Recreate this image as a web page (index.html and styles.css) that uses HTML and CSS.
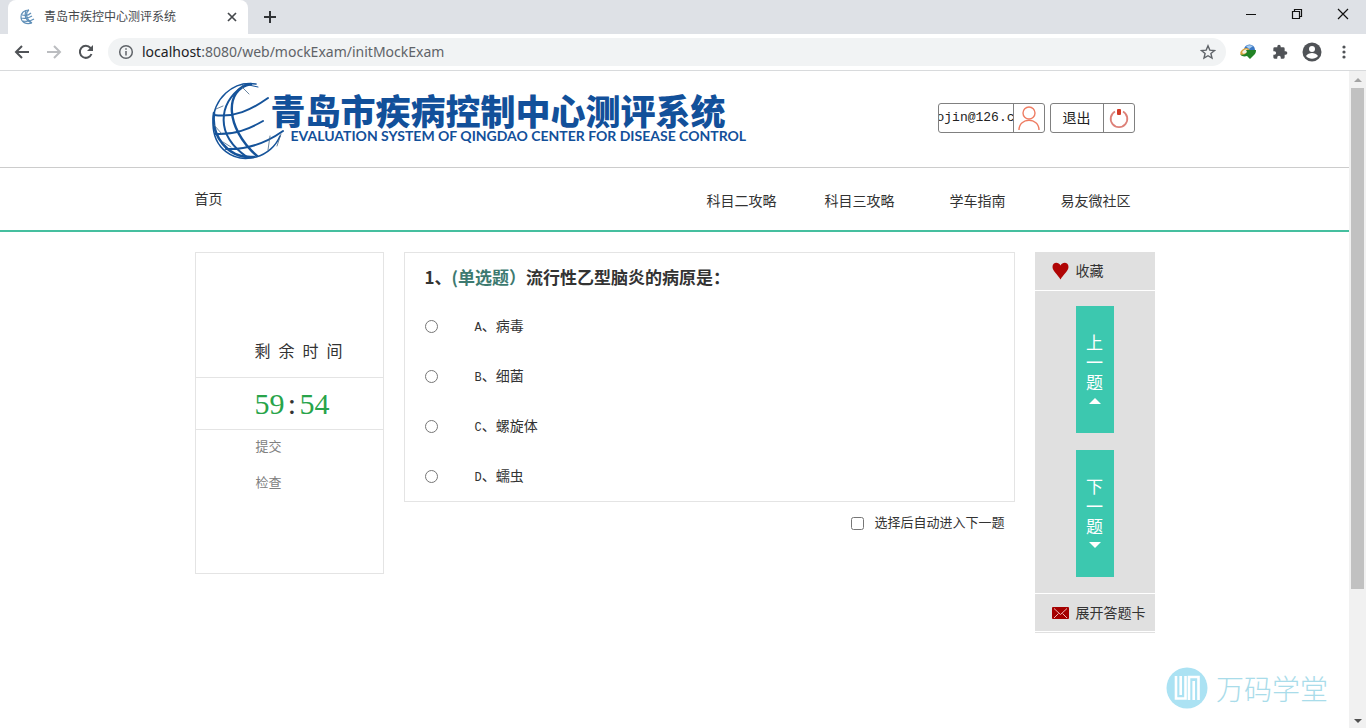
FILE: index.html
```html
<!DOCTYPE html>
<html lang="zh-CN">
<head>
<meta charset="utf-8">
<title>青岛市疾控中心测评系统</title>
<link rel="stylesheet" href="styles.css">
</head>
<body>
<div class="tabstrip">
  <div class="tab">
    <svg class="favicon" width="16" height="16" viewBox="0 0 16 16" fill="none" stroke="#5f8fb8" stroke-width="1.2"><path d="M9 1C4 1 1 4 1 8c0 5 5 8 11 6M6 2c-2 5 0 10 5 12M9 1c-4 3-3 9 3 13M2 6c4 1 7 0 9-2M1 9c5 1 8 0 11-2M3 12c5 1 8 0 11-2"/></svg>
    <span class="tab-title">青岛市疾控中心测评系统</span>
    <button class="icon-btn" aria-label="关闭标签页"><svg width="16" height="16" viewBox="0 0 16 16" fill="none" stroke="#45484c" stroke-width="1.7"><path d="M4 4l8 8M12 4l-8 8"/></svg></button>
  </div>
  <button class="icon-btn new-tab" aria-label="新标签页"><svg width="16" height="16" viewBox="0 0 16 16" fill="none" stroke="#303336" stroke-width="2"><path d="M8 2v12M2 8h12"/></svg></button>
  <div class="win-controls">
    <button class="icon-btn" aria-label="最小化"><svg width="16" height="16" viewBox="0 0 16 16" stroke="#111"><path d="M3 8.500h10"/></svg></button>
    <button class="icon-btn" aria-label="还原"><svg width="16" height="16" viewBox="0 0 16 16" fill="none" stroke="#111" stroke-width="1.2"><path d="M3.500 5.500h7v7h-7zM5.500 5.500v-2h7v7h-2"/></svg></button>
    <button class="icon-btn" aria-label="关闭"><svg width="16" height="16" viewBox="0 0 16 16" stroke="#111" stroke-width="1.2"><path d="M3 3l10 10M13 3L3 13"/></svg></button>
  </div>
</div>
<div class="toolbar">
  <button class="icon-btn" aria-label="后退"><svg width="20" height="20" viewBox="0 0 20 20" fill="none" stroke="#505357" stroke-width="2"><path d="M17 10H4M10 4l-6 6 6 6"/></svg></button>
  <button class="icon-btn" aria-label="前进"><svg width="20" height="20" viewBox="0 0 20 20" fill="none" stroke="#bbbdc0" stroke-width="2"><path d="M3 10h13M10 4l6 6-6 6"/></svg></button>
  <button class="icon-btn" aria-label="刷新"><svg width="20" height="20" viewBox="0 0 20 20" fill="none" stroke="#505357" stroke-width="2"><path d="M15.500 12A6 6 0 1 1 14.500 6L16 7.500"/><path d="M17 3v6h-6z" fill="#505357" stroke="none"/></svg></button>
  <div class="address">
    <svg width="16" height="16" viewBox="0 0 16 16" fill="none" stroke="#5f6368" stroke-width="1.500"><circle cx="8" cy="8" r="6.300"/><path d="M8 7v4.500M8 4.300v1.500"/></svg>
    <span class="url"><span class="host">localhost</span>:8080/web/mockExam/initMockExam</span>
    <button class="icon-btn" aria-label="收藏此页"><svg width="16" height="16" viewBox="0 0 16 16" fill="none" stroke="#5f6368" stroke-width="1.400"><path d="M8 1.800l1.800 4.300 4.700.4-3.600 3 1.100 4.600L8 11.700l-4 2.400 1.100-4.600-3.600-3 4.700-.4z"/></svg></button>
  </div>
  <div class="extensions">
    <button class="icon-btn" aria-label="下载扩展"><svg width="18" height="18" viewBox="0 0 18 18"><circle cx="10.500" cy="7" r="5.500" fill="#3b78c4"/><path d="M7 3c2-1 5-1 7 0l-4 3z" fill="#a9cdef"/><ellipse cx="6" cy="9" rx="5" ry="3.500" fill="#d9a23c" transform="rotate(-30 6 9)"/><ellipse cx="6" cy="8.500" rx="3" ry="1.800" fill="#f4efe0" transform="rotate(-30 6 8.500)"/><path d="M1 11c3 2 6 0 7-2l-1-2 10 0c0 3-1 4-2 5l-4 4-3-3c-3 1-6 0-7-2z" fill="#228326"/></svg></button>
    <button class="icon-btn" aria-label="扩展程序"><svg width="16" height="16" viewBox="0 0 24 24" fill="#505357"><path d="M20.500 11H19V7a2 2 0 0 0-2-2h-4V3.500a2.500 2.500 0 0 0-5 0V5H4a2 2 0 0 0-2 2v3.800h1.500a2.700 2.700 0 0 1 0 5.400H2V20a2 2 0 0 0 2 2h3.800v-1.500a2.700 2.700 0 0 1 5.400 0V22H17a2 2 0 0 0 2-2v-4h1.500a2.500 2.500 0 0 0 0-5z"/></svg></button>
    <button class="icon-btn" aria-label="用户"><svg width="20" height="20" viewBox="0 0 20 20"><circle cx="10" cy="10" r="9.500" fill="#505357"/><circle cx="10" cy="7" r="3" fill="#fff"/><path d="M4 14c1-2 4-3 6-3s5 1 6 3c-3 3.500-9 3.500-12 0z" fill="#fff"/></svg></button>
    <button class="icon-btn" aria-label="菜单"><svg width="16" height="16" viewBox="0 0 16 16" fill="#505357"><circle cx="8" cy="3" r="1.600"/><circle cx="8" cy="8" r="1.600"/><circle cx="8" cy="13" r="1.600"/></svg></button>
  </div>
</div>
<div class="viewport">
  <div class="page">
    <header class="header">
      <div class="wrap header-row">
        <div class="logo">
          <svg class="globe" width="74" height="80" viewBox="0 0 74 80" fill="none" stroke="#15539a" stroke-width="2" stroke-linecap="round">
            <path d="M45 3C22-1 2 18 2 42c0 25 20 40 43 34 11-3 20-11 24-21" stroke-width="1.500"/>
            <path d="M3 32c-3 22 13 46 40 44" stroke-width="2.600"/>
            <path d="M32 5C7 23 4 54 36 76"/>
            <path d="M40 3C13 8 14 47 46 75" stroke-width="2.400"/>
            <path d="M33 3l14 3" stroke-width="1"/>
            <path d="M3 34c20 3 37-5 54-17"/>
            <path d="M4 53c20 1 34-5 48-13"/>
            <path d="M15 68c21 1 40-6 57-18"/>
            <path d="M30 5l8 8M5 28l7-3M20 66l-8-5M59 55l-2 14M70 53l-4 12M3 44l8 9" stroke-width=".8" stroke="#456789"/>
          </svg>
          <div class="logo-text">
            <div class="logo-cn">青岛市疾病控制中心测评系统</div>
            <div class="logo-en">EVALUATION SYSTEM OF QINGDAO CENTER FOR DISEASE CONTROL</div>
          </div>
        </div>
        <div class="account">
          <a class="pill" href="#"><span class="email"><span>ojin@126.c</span></span><span class="pill-icon"><svg width="26" height="26" viewBox="0 0 26 26" fill="none" stroke="#ee7d63" stroke-width="1.400"><circle cx="13" cy="8" r="6"/><path d="M3 25c0-13 20-13 20 0"/></svg></span></a>
          <a class="pill" href="#"><span class="exit">退出</span><span class="pill-icon"><svg width="22" height="22" viewBox="0 0 22 22" fill="none"><path d="M7 4.500a8.300 8.300 0 1 0 8 0" stroke="#dd8078" stroke-width="1.800"/><rect x="9" y="2" width="4" height="6" rx="1" fill="#d33a26"/></svg></span></a>
        </div>
      </div>
    </header>
    <nav class="nav">
      <div class="wrap nav-row">
        <a class="home" href="#">首页</a>
        <div class="links">
          <a href="#">科目二攻略</a><a href="#">科目三攻略</a><a href="#">学车指南</a><a href="#">易友微社区</a>
        </div>
      </div>
    </nav>
    <main class="wrap main">
      <aside class="timer">
        <h2 class="timer-title">剩&nbsp; 余&nbsp; 时&nbsp; 间</h2>
        <div class="clock"><span>59</span><span class="colon">:</span><span>54</span></div>
        <div class="actions">
          <a href="#">提交</a>
          <a href="#">检查</a>
        </div>
      </aside>
      <section class="exam">
        <form class="question">
          <h1 class="question-title">1、<span class="kind">(单选题）</span>流行性乙型脑炎的病原是：</h1>
          <label class="option"><input type="radio" name="answer"><span><b class="letter">A</b>、病毒</span></label>
          <label class="option"><input type="radio" name="answer"><span><b class="letter">B</b>、细菌</span></label>
          <label class="option"><input type="radio" name="answer"><span><b class="letter">C</b>、螺旋体</span></label>
          <label class="option"><input type="radio" name="answer"><span><b class="letter">D</b>、蠕虫</span></label>
        </form>
        <label class="auto-next"><input type="checkbox"><span>选择后自动进入下一题</span></label>
      </section>
      <aside class="side">
        <a class="side-link" href="#"><svg width="17" height="18" viewBox="0 0 17 18"><path d="M8.500 17.500C6 13 .5 9 .5 5c0-5 6-5.500 8-1.500 2-4 8-3.500 8 1.500 0 4-5.500 8-8 12.500z" fill="#b00505"/></svg>收藏</a>
        <div class="steps">
          <button class="step"><span>上</span><span>一</span><span>题</span><i class="tri up"></i></button>
          <button class="step"><span>下</span><span>一</span><span>题</span><i class="tri down"></i></button>
        </div>
        <a class="side-link" href="#"><svg width="17" height="12" viewBox="0 0 17 12"><rect width="17" height="12" rx="1" fill="#a50000"/><path d="M2 1.500l6.500 6 6.500-6M2 11l4.500-4.500M15 11l-4.500-4.500" fill="none" stroke="#efb5b5" stroke-width="1"/></svg>展开答题卡</a>
      </aside>
    </main>
    <div class="watermark">
      <svg width="42" height="42" viewBox="0 0 42 42"><circle cx="21" cy="21" r="20.500" fill="#abe2f3"/><g fill="none" stroke="#fff" stroke-width="2.600"><path d="M10 9v22.500h9.500V9M14.700 9v19M23 33V10h9.500v23M27.700 33V14"/></g></svg>
      <span>万码学堂</span>
    </div>
  </div>
  <div class="scrollbar">
    <i class="arrow arrow-up"></i>
    <div class="track"><div class="thumb"></div></div>
    <i class="arrow arrow-down"></i>
  </div>
</div>
</body>
</html>
```

FILE: styles.css
```css
* { box-sizing: border-box; }

body {
  margin: 0;
  height: 100vh;
  display: flex;
  flex-direction: column;
  overflow: hidden;
  background: #fff;
  color: #333;
  font: 14px/20px "Liberation Sans", "Noto Sans CJK SC", sans-serif;
}

a { color: inherit; text-decoration: none; }
h1, h2 { margin: 0; }
svg { display: block; flex: none; }

.icon-btn {
  display: flex;
  justify-content: center;
  padding: 0;
  border: 0;
  background: none;
}

/* Browser frame */
.tabstrip {
  display: flex;
  align-items: center;
  height: 34px;
  padding: 0 15px 0 8px;
  background: #dee1e6;
}

.tab {
  display: flex;
  align-items: center;
  gap: 8px;
  align-self: stretch;
  width: 240px;
  padding: 0 8px 0 12px;
  border-radius: 8px 8px 0 0;
  background: #fff;
}

.tab-title {
  flex: 1;
  color: #45484c;
  font-size: 12px;
}

.new-tab { margin-left: 14px; }

.win-controls {
  display: flex;
  gap: 30px;
  margin-left: auto;
  padding-bottom: 6px;
}

.toolbar {
  display: flex;
  align-items: center;
  gap: 12px;
  height: 37px;
  padding: 0 12px;
  border-bottom: 1px solid #d8dadc;
}

.address {
  display: flex;
  flex: 1;
  align-items: center;
  gap: 8px;
  height: 28px;
  padding: 0 10px;
  border-radius: 14px;
  background: #f1f3f4;
}

.url {
  flex: 1;
  color: #5f6368;
  font-family: "Noto Sans", sans-serif;
  font-size: 14px;
}

.host { color: #202124; }

.extensions {
  display: flex;
  align-items: center;
  gap: 12px;
}

.extensions .icon-btn { width: 20px; }

/* Page area */
.viewport {
  display: flex;
  flex: 1;
  min-height: 0;
}

.page {
  position: relative;
  flex: 1;
}

.wrap {
  max-width: 960px;
  margin: 0 auto;
}

.header { border-bottom: 1px solid #ccc; }

.header-row {
  display: flex;
  align-items: center;
  justify-content: space-between;
  height: 96px;
  padding: 0 20px 2px 16px;
}

.logo {
  display: flex;
  align-items: center;
  color: #12509a;
  white-space: nowrap;
}

.globe { margin-top: 6px; }

.logo-text { margin-left: -14px; }

.logo-cn {
  font: 900 35px/36px "Noto Sans CJK SC", sans-serif;
}

.logo-en {
  padding-left: 20px;
  font: 700 14px/16px Lato, sans-serif;
}

.account { display: flex; gap: 5px; }

.pill {
  display: flex;
  height: 30px;
  border: 1px solid #808080;
  border-radius: 3px;
  color: #222;
  line-height: 28px;
}

.email {
  display: flex;
  justify-content: center;
  width: 74px;
  overflow: hidden;
  font-family: "Liberation Mono", monospace;
  font-size: 13px;
}

.exit { padding: 0 12px; }

.pill-icon {
  display: flex;
  align-items: center;
  justify-content: center;
  width: 31px;
  border-left: 1px solid #808080;
}

.nav { border-bottom: 2px solid #45bf9f; }

.nav-row {
  display: flex;
  justify-content: space-between;
  height: 62px;
}

.home { line-height: 62px; }

.links {
  display: flex;
  line-height: 66px;
  text-align: center;
}

.links a { width: 118px; }

.main {
  display: flex;
  align-items: flex-start;
  gap: 20px;
  padding-top: 20px;
}

/* Timer */
.timer {
  width: 189px;
  border: 1px solid #e4e4e4;
}

.timer-title {
  padding: 88px 0 15px 59px;
  font: 16px/21px "Liberation Serif", "Noto Sans CJK SC", serif;
}

.clock {
  display: flex;
  height: 53px;
  padding-left: 59px;
  border: solid #e4e4e4;
  border-width: 1px 0;
  color: #28a44a;
  font: 30px/52px "Liberation Serif", serif;
}

.colon {
  width: 15px;
  color: #333;
  text-align: center;
}

.actions {
  display: flex;
  flex-direction: column;
  gap: 16px;
  padding: 7px 0 80px 60px;
  color: #808080;
  font-size: 13px;
}

/* Question */
.exam { flex: 1; }

.question {
  padding: 11px 20px 0;
  border: 1px solid #e4e4e4;
}

.question-title {
  padding-bottom: 11px;
  font: bold 17px/26px "Noto Sans CJK SC", sans-serif;
}

.kind { color: #3d7a70; }

.option {
  display: flex;
  align-items: center;
  gap: 37px;
  height: 50px;
}

.option input, .auto-next input {
  width: 13px;
  height: 13px;
  margin: 0;
}

.letter {
  font: 12px "Liberation Mono", monospace;
}

.auto-next {
  display: flex;
  align-items: center;
  justify-content: flex-end;
  gap: 10px;
  padding: 11px 10px 0 0;
  font-size: 13px;
}

/* Side panel */
.side {
  width: 120px;
  border-bottom: 1px solid #e0e0e0;
  background: #e0e0e0;
}

.side-link {
  display: flex;
  align-items: center;
  gap: 7px;
  height: 38px;
  padding-left: 17px;
}

.side-link:last-child { border-bottom: 1px solid #fff; }

.steps {
  display: flex;
  flex-direction: column;
  align-items: center;
  gap: 17px;
  padding: 15px 0 16px;
  border: solid #fff;
  border-width: 1px 0;
}

.step {
  display: flex;
  flex-direction: column;
  align-items: center;
  justify-content: center;
  width: 38px;
  height: 127px;
  padding: 0 0 4px;
  border: 0;
  background: #3cc8af;
  color: #fff;
  font: 17px/20px "Noto Sans CJK SC", sans-serif;
}

.tri {
  border: solid transparent;
  border-width: 0 6px;
}

.up { margin-top: 6px; border-bottom: 6px solid #fff; }
.down { margin-top: 6px; border-top: 6px solid #fff; }

.watermark {
  position: absolute;
  right: 21px;
  bottom: 19px;
  display: flex;
  align-items: center;
  gap: 8px;
  color: #a9dcea;
  font: 300 28px/40px "Noto Sans CJK SC", sans-serif;
}

/* Scrollbar */
.scrollbar {
  display: flex;
  flex-direction: column;
  align-items: center;
  width: 17px;
  padding: 7px 0 5px;
  background: #f1f1f1;
}

.track {
  flex: 1;
  width: 13px;
  margin: 6px 0 5px;
}

.thumb {
  height: 80%;
  background: #c1c1c1;
}

.arrow {
  border: solid transparent;
  border-width: 0 4px;
}

.arrow-up { border-bottom: 4px solid #a3a3a3; }
.arrow-down { border-top: 4px solid #505050; }
```
